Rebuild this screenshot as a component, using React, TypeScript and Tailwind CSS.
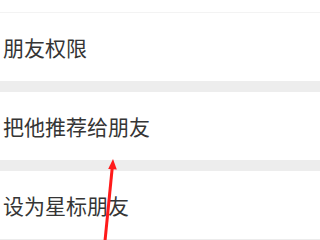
const rows = ['朋友权限', '把他推荐给朋友', '设为星标朋友'];

export default function App() {
  return (
    <div
      className="relative w-[320px] h-[240px] overflow-hidden bg-[#ededed]"
      style={{ fontFamily: '"Noto Sans CJK SC", "Noto Sans", sans-serif' }}
    >
      <div className="h-[12px] bg-white" />
      <div className="h-px bg-[#f3f3f3]" />
      <div className="flex flex-col gap-[11px]">
        {rows.map((label) => (
          <div key={label} className="h-[68px] bg-white flex items-center pl-[3px]">
            <span className="text-[21px] leading-none text-[#353535]">{label}</span>
          </div>
        ))}
      </div>
      <div className="h-px bg-[#ececec]" />

      {/* red annotation arrow */}
      <svg className="absolute left-0 top-0" width="320" height="240" viewBox="0 0 320 240">
        <line x1="105" y1="241" x2="112.4" y2="166" stroke="#ff1a1a" strokeWidth="3" />
        <polygon points="113,159 108.2,169 116.8,169.6" fill="#ff1a1a" />
      </svg>
    </div>
  );
}
